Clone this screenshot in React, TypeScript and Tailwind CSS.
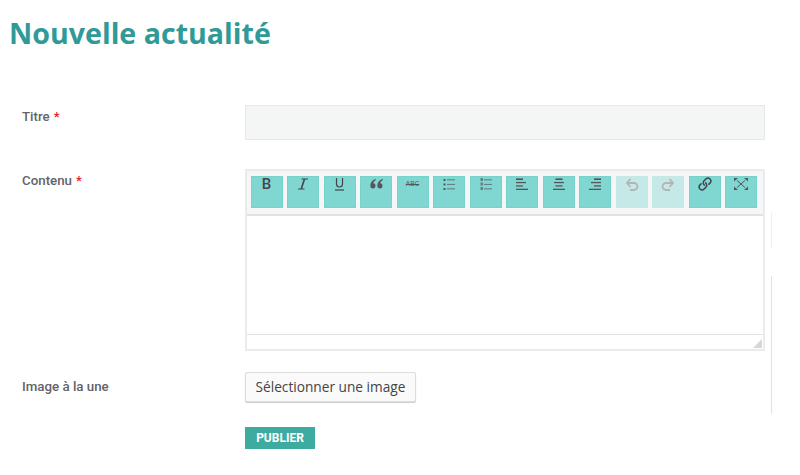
import { Link } from "lucide-react";
import type { ReactNode } from "react";

const ink = "#55555c";

function Lines({ rows }: { rows: [number, number, string?][] }) {
  return (
    <svg width="14" height="13" viewBox="0 0 14 13">
      {rows.map(([x, w, color], i) => (
        <rect key={i} x={x} y={0.5 + i * 3.4} width={w} height="1.3" fill={color ?? ink} />
      ))}
    </svg>
  );
}

function ListIcon({ numbered }: { numbered?: boolean }) {
  return (
    <svg width="12" height="13" viewBox="0 0 12 13">
      {[1, 5.500, 10].map((y) => (
        <g key={y}>
          {numbered ? (
            <rect x="0.500" y={y - 1} width="2.500" height="3" fill={ink} opacity="0.65" />
          ) : (
            <rect x="0.500" y={y} width="2" height="2" fill={ink} />
          )}
          <rect x="4" y={y + 0.4} width="8" height="0.9" fill={ink} opacity="0.8" />
        </g>
      ))}
    </svg>
  );
}

function Arrow({ flip }: { flip?: boolean }) {
  return (
    <svg
      width="14"
      height="13"
      viewBox="0 0 14 13"
      fill="none"
      stroke="#b4b4b4"
      strokeWidth="1.8"
      className={flip ? "-scale-x-100" : ""}
    >
      <path d="M2 5h7a3.500 3.500 0 0 1 0 7H5" />
      <path d="M5.500 1L2 5l3.500 4" />
    </svg>
  );
}

const tools: { key: string; icon: ReactNode; disabled?: boolean }[] = [
  {
    key: "bold",
    icon: <span className="font-['Roboto',sans-serif] text-[15px] leading-[14px] font-medium text-[#44444c]">B</span>,
  },
  {
    key: "italic",
    icon: (
      <svg width="10" height="12" viewBox="0 0 10 12" fill="none" stroke="#44444c">
        <path d="M3.500 1H10M0 11h6.500" strokeWidth="1" />
        <path d="M6.500 1L3.200 11" strokeWidth="1.600" />
      </svg>
    ),
  },
  {
    key: "underline",
    icon: (
      <svg width="9" height="13" viewBox="0 0 9 13" fill="none" stroke="#44444c" strokeWidth="1.200">
        <path d="M1.500 0v6a3 3 0 0 0 6 0V0" />
        <path d="M0 12h9" />
      </svg>
    ),
  },
  {
    key: "quote",
    icon: (
      <svg width="13" height="10" viewBox="0 0 13 10" fill={ink}>
        <path d="M5.500 0C2.500 1 .3 3.300.3 6.800a2.600 2.600 0 1 0 3-2.500c.2-1.300 1.100-2.400 2.600-3.200zM12.500 0c-3 1-5.200 3.300-5.200 6.800a2.600 2.600 0 1 0 3-2.500c.2-1.300 1.100-2.400 2.600-3.200z" />
      </svg>
    ),
  },
  {
    key: "strike",
    icon: (
      <span className="font-['Liberation_Sans',sans-serif] text-[6.500px] leading-[10px] text-[#55555c] line-through">
        ABC
      </span>
    ),
  },
  { key: "ul", icon: <ListIcon /> },
  { key: "ol", icon: <ListIcon numbered /> },
  {
    key: "left",
    icon: <Lines rows={[[1, 7, "#5a2a3a"], [1, 10], [1, 7], [1, 12]]} />,
  },
  {
    key: "center",
    icon: <Lines rows={[[3.500, 7, "#5a2a3a"], [2, 10], [3.500, 7], [1, 12]]} />,
  },
  {
    key: "right",
    icon: <Lines rows={[[6, 7, "#5a2a3a"], [3, 10], [6, 7], [1, 12]]} />,
  },
  { key: "undo", icon: <Arrow />, disabled: true },
  { key: "redo", icon: <Arrow flip />, disabled: true },
  { key: "link", icon: <Link size={14} strokeWidth={2.6} color="#44444c" className="-scale-x-100 -rotate-90" /> },
  {
    key: "fullscreen",
    icon: (
      <svg width="14" height="12" viewBox="0 0 14 12" stroke={ink} fill={ink}>
        <path d="M3 2.500l8 7M11 2.500l-8 7" strokeWidth="1" />
        <path d="M0 0h4L0 3.500zM14 0h-4l4 3.500zM0 12h4L0 8.500zM14 12h-4l4-3.500z" strokeWidth="0" />
      </svg>
    ),
  },
];

function Label({ text, required }: { text: string; required?: boolean }) {
  return (
    <label className="pl-[22px] font-['Roboto',sans-serif] text-[13.300px] leading-[16px] font-medium text-[#636368]">
      {text}
      {required && <span className="ml-1 text-[#e8212b]">*</span>}
    </label>
  );
}

export default function App() {
  return (
    <div className="relative h-[475px] w-[800px] overflow-hidden bg-white">
      <h1 className="pt-[14px] pl-[9px] font-['Open_Sans',sans-serif] text-[28.600px] leading-[38px] font-bold text-[#2f9a98]">
        Nouvelle actualité
      </h1>

      <div className="mt-[53px] grid grid-cols-[245px_520px]">
        <div className="-mt-[2px]">
          <Label text="Titre" required />
        </div>
        <input className="h-[35px] border border-[#e6e8e7] bg-[#f4f6f5]" />

        <div className="mt-[27px]">
          <Label text="Contenu" required />
        </div>
        <div className="mt-[29px] flex h-[182px] flex-col border-2 border-[#ebebeb]">
          <div className="flex h-[45px] shrink-0 gap-[4.500px] border-b-2 border-[#e2e2e2] bg-[#f5f7f6] pt-[5px] pl-[3.500px]">
            {tools.map((tool) => (
              <button
                key={tool.key}
                className={`flex h-[32px] w-[32px] justify-center border ${
                  tool.disabled
                    ? "border-[#c5e9e6] bg-[#c5e9e6]"
                    : "border-[#76d3cb] bg-[#80d6d1]"
                }`}
              >
                <span className="flex h-[14px] items-center">{tool.icon}</span>
              </button>
            ))}
          </div>
          <div className="flex-1 bg-white" />
          <div className="flex h-[15px] shrink-0 items-end justify-end border-t border-[#e2e2e2] bg-white pr-[1px] pb-[1px]">
            <svg width="9" height="9" viewBox="0 0 9 9" fill="#d6d6d6">
              <path d="M0 9L9 0v9z" />
            </svg>
          </div>
        </div>

        <div className="mt-[21px] flex h-[30px] items-center">
          <Label text="Image à la une" />
        </div>
        <div className="mt-[21px]">
          <button className="h-[30px] rounded-[2px] border border-[#dcdcdc] bg-[#fafafa] px-[9.500px] font-['Open_Sans',sans-serif] text-[13.700px] text-[#444] shadow-[0_1px_1px_rgba(0,0,0,0.2)]">
            Sélectionner une image
          </button>
        </div>

        <div className="col-start-2 mt-[22px]">
          <button className="h-[22px] w-[70px] bg-[#3dab9f] font-['Roboto',sans-serif] text-[12px] font-bold text-white">
            PUBLIER
          </button>
        </div>
      </div>

      <div className="absolute top-[213px] left-[771px] h-[35px] w-px bg-[#eeeeee]" />
      <div className="absolute top-[276px] left-[771px] h-[138px] w-px bg-[#e2e2e2]" />
    </div>
  );
}
